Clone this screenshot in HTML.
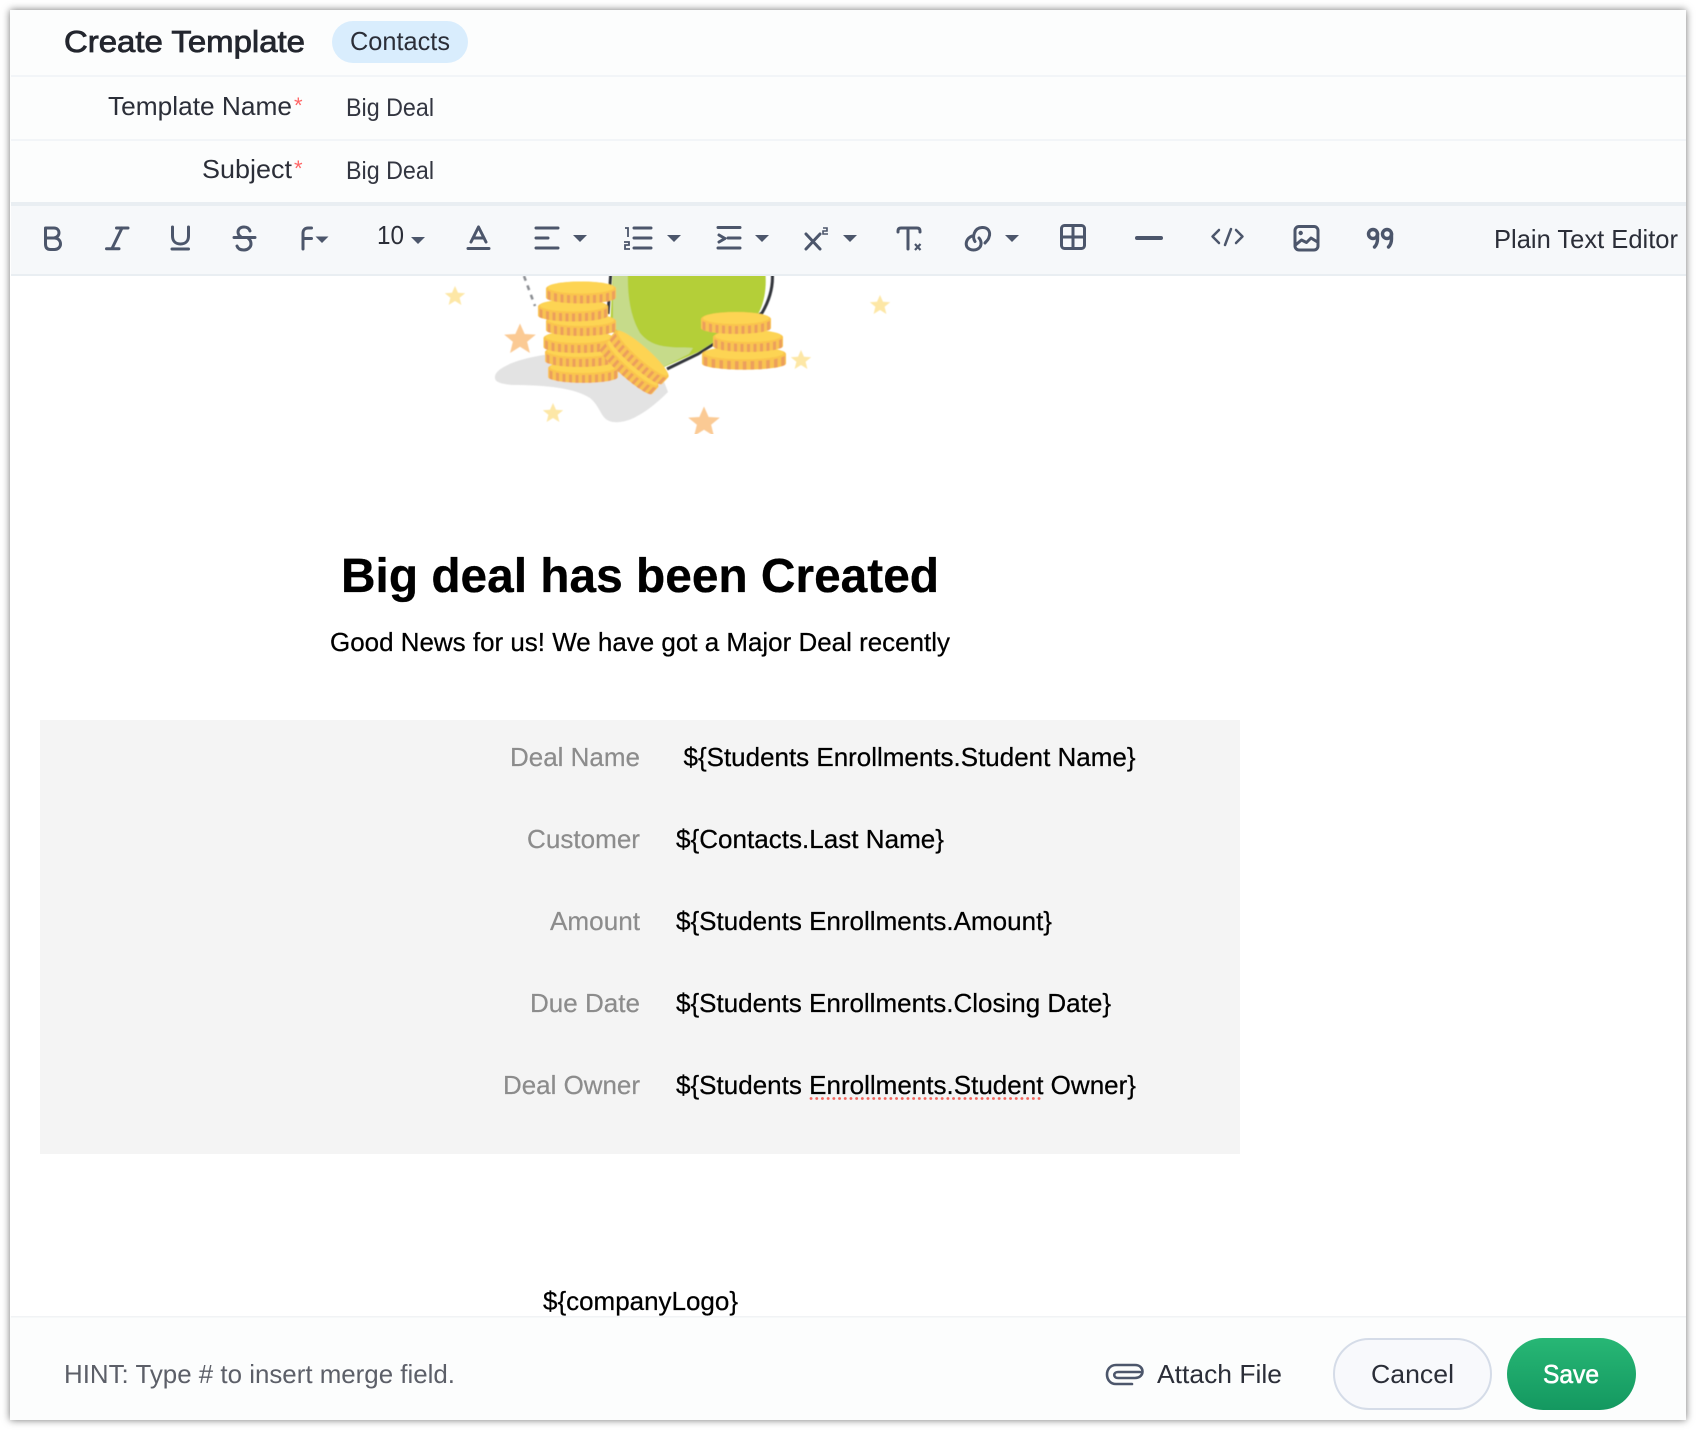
<!DOCTYPE html>
<html><head><meta charset="utf-8"><title>Create Template</title>
<style>
html,body{margin:0;padding:0;background:#fff;width:1696px;height:1430px;overflow:hidden}
svg{display:block}
text{font-family:"Liberation Sans",sans-serif;white-space:pre}
.ui{fill:#2b2e38;font-size:26px}
.lab{fill:#8c8c8c;font-size:26px;stroke:#8c8c8c;stroke-width:.2px}
.val{fill:#000;font-size:26px;stroke:#000;stroke-width:.25px}
.ic{fill:none;stroke:#4c566b;stroke-width:3;stroke-linecap:round;stroke-linejoin:round}
.car{fill:#4c566b}
</style></head><body>
<svg xmlns="http://www.w3.org/2000/svg" width="1696" height="1430" viewBox="0 0 1696 1430">
<defs>
<clipPath id="ill"><rect x="430" y="276" width="500" height="158"/></clipPath>
<clipPath id="cs"><path d="M-35 0v9a35 6 0 0 0 70 0v-9z"/></clipPath>
<filter id="soft" x="-5%" y="-5%" width="110%" height="110%"><feGaussianBlur stdDeviation="0.55"/></filter>
<g id="c">
<path d="M-35 0v9a35 6 0 0 0 70 0v-9z" fill="#f9c351"/>
<path clip-path="url(#cs)" d="M-32 2v15M-25.500 2v15M-19 2v15M-12.500 2v15M-6 2v15M.5 2v15M7 2v15M13.500 2v15M20 2v15M26.500 2v15M32.500 2v15" stroke="#ec9f5b" stroke-width="3" fill="none"/>
<ellipse cx="0" cy="0" rx="35" ry="7" fill="#fac54d"/>
<ellipse cx="0" cy="-1" rx="33" ry="6" fill="#fdd452"/>
</g>
<path id="s" d="M0-10 3-3.200 10.200-2.800 4.600 1.800 6.400 9 0 5 -6.400 9 -4.600 1.800 -10.200-2.800 -3-3.200z"/>
<linearGradient id="g" x1="0" y1="0" x2="0" y2="1"><stop offset="0" stop-color="#27b775"/><stop offset="1" stop-color="#149860"/></linearGradient>
</defs>

<rect x="10" y="10" width="1676" height="1410" fill="#fff" style="filter:drop-shadow(0 0 4px rgba(0,0,0,.55))"/>

<!-- header -->
<rect x="10" y="10" width="1676" height="193" fill="#fcfdfd"/>
<rect x="11" y="75" width="1675" height="2" fill="#f2f5f8"/>
<rect x="11" y="139" width="1675" height="2" fill="#f2f5f8"/>
<text x="64" y="52" font-size="31" fill="#23262e" stroke="#23262e" stroke-width=".8" textLength="241" lengthAdjust="spacingAndGlyphs">Create Template</text>
<rect x="332" y="21" width="136" height="42" rx="21" fill="#d9edfd"/>
<text x="350" y="50" class="ui" textLength="100" lengthAdjust="spacingAndGlyphs">Contacts</text>
<text x="108" y="115" class="ui" textLength="184" lengthAdjust="spacingAndGlyphs">Template Name</text>
<text x="294" y="113" font-size="22" fill="#f66">*</text>
<text x="346" y="116" font-size="25" fill="#333641" textLength="88" lengthAdjust="spacingAndGlyphs">Big Deal</text>
<text x="202" y="178" class="ui" textLength="90" lengthAdjust="spacingAndGlyphs">Subject</text>
<text x="294" y="176" font-size="22" fill="#f66">*</text>
<text x="346" y="179" font-size="25" fill="#333641" textLength="88" lengthAdjust="spacingAndGlyphs">Big Deal</text>

<!-- illustration -->
<g clip-path="url(#ill)"><g filter="url(#soft)">
<path d="M495 376C497 366 525 356 560 353L650 345 668 392C650 410 630 424 613 422 600 420 602 408 590 398 575 388 545 385 513 385 500 384 494 382 495 376z" fill="#e3e3e3"/>
<path d="M524 276l11 30" stroke="#8a8d92" stroke-width="2.500" stroke-dasharray="5 5" fill="none"/>
<path d="M611 270l-3 44" stroke="#33363a" stroke-width="3" fill="none"/>
<path d="M772 270c2 16-3 31-10 43L698 354 667 369" stroke="#33363a" stroke-width="3" fill="none"/>
<path d="M613 270H765C767 285 765 302 758 314L698 352 662 368 610 330z" fill="#b4cf37"/>
<path d="M613 270h15c-1 24 2 46 12 63 8 10 18 13 30 14 8 1 16 0 23 1l-4 6-26 13-50-40z" fill="#c6db8a"/>
<use href="#c" x="583" y="368"/>
<use href="#c" x="580" y="352"/>
<use href="#c" x="578.500" y="338"/>
<use href="#c" x="581" y="321"/>
<use href="#c" x="573" y="306.500"/>
<use href="#c" x="581" y="288.500"/>
<g transform="translate(632,364) rotate(41.500)"><use href="#c"/></g>
<g transform="translate(642,354) rotate(41.500)"><use href="#c"/></g>
<g transform="translate(744,354) scale(1.2,1.05)"><use href="#c"/></g>
<use href="#c" x="748" y="337"/>
<use href="#c" x="736" y="319"/>
<g fill="#fde7a6">
<use href="#s" transform="translate(455,296)"/>
<use href="#s" transform="translate(880,305)"/>
<use href="#s" transform="translate(801,360)"/>
<use href="#s" transform="translate(553,413)"/>
</g>
<g fill="#fbca94">
<use href="#s" transform="translate(520,339) scale(1.550)"/>
<use href="#s" transform="translate(704,422) scale(1.550)"/>
</g>
</g></g>

<!-- body -->
<text x="341" y="592" font-size="48" font-weight="bold" fill="#000" stroke="#000" stroke-width=".3" textLength="598" lengthAdjust="spacingAndGlyphs">Big deal has been Created</text>
<text x="330" y="651" class="val" textLength="620" lengthAdjust="spacingAndGlyphs">Good News for us! We have got a Major Deal recently</text>
<rect x="40" y="720" width="1200" height="434" fill="#f4f4f4"/>
<text x="510" y="766" class="lab" textLength="130" lengthAdjust="spacingAndGlyphs">Deal Name</text>
<text x="683.500" y="766" class="val" textLength="452" lengthAdjust="spacingAndGlyphs">${Students Enrollments.Student Name}</text>
<text x="527" y="848" class="lab" textLength="113" lengthAdjust="spacingAndGlyphs">Customer</text>
<text x="676" y="848" class="val" textLength="268" lengthAdjust="spacingAndGlyphs">${Contacts.Last Name}</text>
<text x="550" y="930" class="lab" textLength="90" lengthAdjust="spacingAndGlyphs">Amount</text>
<text x="676" y="930" class="val" textLength="376" lengthAdjust="spacingAndGlyphs">${Students Enrollments.Amount}</text>
<text x="530" y="1012" class="lab" textLength="110" lengthAdjust="spacingAndGlyphs">Due Date</text>
<text x="676" y="1012" class="val" textLength="435" lengthAdjust="spacingAndGlyphs">${Students Enrollments.Closing Date}</text>
<text x="503" y="1094" class="lab" textLength="137" lengthAdjust="spacingAndGlyphs">Deal Owner</text>
<text x="676" y="1094" class="val" textLength="460" lengthAdjust="spacingAndGlyphs">${Students Enrollments.Student Owner}</text>
<path d="M811 1098.500H1042" stroke="#f4665e" stroke-width="2.800" stroke-linecap="round" stroke-dasharray=".1 5.600" fill="none"/>
<text x="543" y="1310" class="val" textLength="195" lengthAdjust="spacingAndGlyphs">${companyLogo}</text>

<!-- toolbar -->
<rect x="11" y="202" width="1675" height="74" fill="#f6f8fa"/>
<rect x="11" y="202" width="1675" height="4" fill="#e9eef2"/>
<rect x="11" y="274" width="1675" height="2" fill="#e9eef2"/>

<path class="ic" d="M45.500 228V244c0 4 2 5.500 5 5.500h4c4 0 6-3 6-5.500 0-3-2-6-6-6h-9M54 238c4-1 5-3 5-5 0-3-2-5-5-5h-8.500"/>
<path class="ic" d="M116.500 228h11.500M122 228l-10 20.500M106.500 248.700h12.500"/>
<path class="ic" d="M172.500 227v9c0 5 3 8 8 8s8-3 8-8v-9M172 249h16.500"/>
<path class="ic" d="M250 231c-1-3-3-4-6-4-4 0-6 2.500-6 5 0 2 1 3.500 3 5M248 238c2 1.500 3 3.500 3 6 0 3-3 6-7 6-3 0-6-1-7-4M234 237.500h21"/>
<path class="ic" d="M303 249V233c0-3 2-5 5-5h3.500M303 238.500h8.500"/>
<path class="car" d="M315.500 236.500h13l-6.500 6.500z"/>
<text x="377" y="244" class="ui" textLength="27" lengthAdjust="spacingAndGlyphs">10</text>
<path class="car" d="M411 237h14l-7 7z"/>
<path class="ic" d="M471 242l7.500-15 7.500 15M473 238h11M468 248.500h21"/>
<path class="ic" d="M536 228h22M536 238h12M536 248h22"/>
<path class="car" d="M573 235h14l-7 7z"/>
<path d="M625 228h3v9M624 242h5v3h-4v4h5" fill="none" stroke="#4c566b" stroke-width="1.800"/>
<path class="ic" d="M634 228h17M634 238h17M634 248h17"/>
<path class="car" d="M667 235h14l-7 7z"/>
<path class="ic" d="M718 227.500h22M728 238h12M718 248h22M719 235l6 3.500-6 3.500"/>
<path class="car" d="M755 235h14l-7 7z"/>
<path class="ic" d="M806 234l14 15M820 234l-14 15"/>
<path d="M823 228h4v3h-4v3h5" fill="none" stroke="#4c566b" stroke-width="1.600"/>
<path class="car" d="M843 235h14l-7 7z"/>
<path class="ic" d="M898 232v-1c0-2 1-3 3-3h16c2 0 3 1 3 3v1M908 228v21"/>
<path d="M915 244l5.500 6M920.500 244l-5.500 6" fill="none" stroke="#4c566b" stroke-width="2.200"/>
<path class="ic" d="M975 241.500C972 237 974 228 982 227.500 988 227 991 232 989 237 988.500 240 986 241.500 985 243"/>
<path class="ic" d="M972 236C967 238 965 243 967 247 970 251 977 251 980 247 982 244 981 240 979 238"/>
<path class="car" d="M1005 235h14l-7 7z"/>
<rect class="ic" x="1061.500" y="225.500" width="23" height="23" rx="3"/>
<path class="ic" d="M1073 226v22M1062 237h22"/>
<path d="M1137 238h24" stroke="#4c566b" stroke-width="4" stroke-linecap="round" fill="none"/>
<path class="ic" d="M1219 230l-6.500 6.500 6.500 6.500M1236 230l6.500 6.500-6.500 6.500M1231 229l-6 16" style="stroke-width:2.500"/>
<rect class="ic" x="1295" y="226.500" width="23" height="23.500" rx="4"/>
<path class="ic" d="M1295.500 245l6-5 5 2.500 4.500-4.500 6.500 4"/>
<circle cx="1300.700" cy="233" r="2.200" fill="#4c566b"/>
<g class="ic" style="stroke-width:3.400">
<circle cx="1373" cy="234" r="4.500"/><path d="M1377.500 234v5c0 3-1 6-3 8"/>
<circle cx="1387" cy="234" r="4.500"/><path d="M1391.500 234v5c0 3-1 6-3 8"/>
</g>
<text x="1494" y="248" class="ui" textLength="184" lengthAdjust="spacingAndGlyphs">Plain Text Editor</text>

<!-- footer -->
<rect x="10" y="1316" width="1676" height="104" fill="#fcfdfd"/>
<rect x="11" y="1316" width="1675" height="1.500" fill="#f1f3f5"/>
<text x="64" y="1383" font-size="26" fill="#5c5f68" textLength="391" lengthAdjust="spacingAndGlyphs">HINT: Type # to insert merge field.</text>
<path class="ic" d="M1132 1384h-16c-12 0-12-19 0-19h19c10 0 10 13 0 13h-17c-5 0-5-6 0-6h22" style="stroke-width:2.600"/>
<text x="1157" y="1383" class="ui" textLength="125" lengthAdjust="spacingAndGlyphs">Attach File</text>
<rect x="1334" y="1339" width="157" height="70" rx="35" fill="#f8f9fc" stroke="#d5dce8" stroke-width="2"/>
<text x="1371" y="1383" class="ui" textLength="83" lengthAdjust="spacingAndGlyphs">Cancel</text>
<rect x="1507" y="1338" width="129" height="72" rx="36" fill="url(#g)"/>
<text x="1543" y="1383" font-size="26" fill="#fff" stroke="#fff" stroke-width=".6" textLength="56" lengthAdjust="spacingAndGlyphs">Save</text>
</svg>
</body></html>
